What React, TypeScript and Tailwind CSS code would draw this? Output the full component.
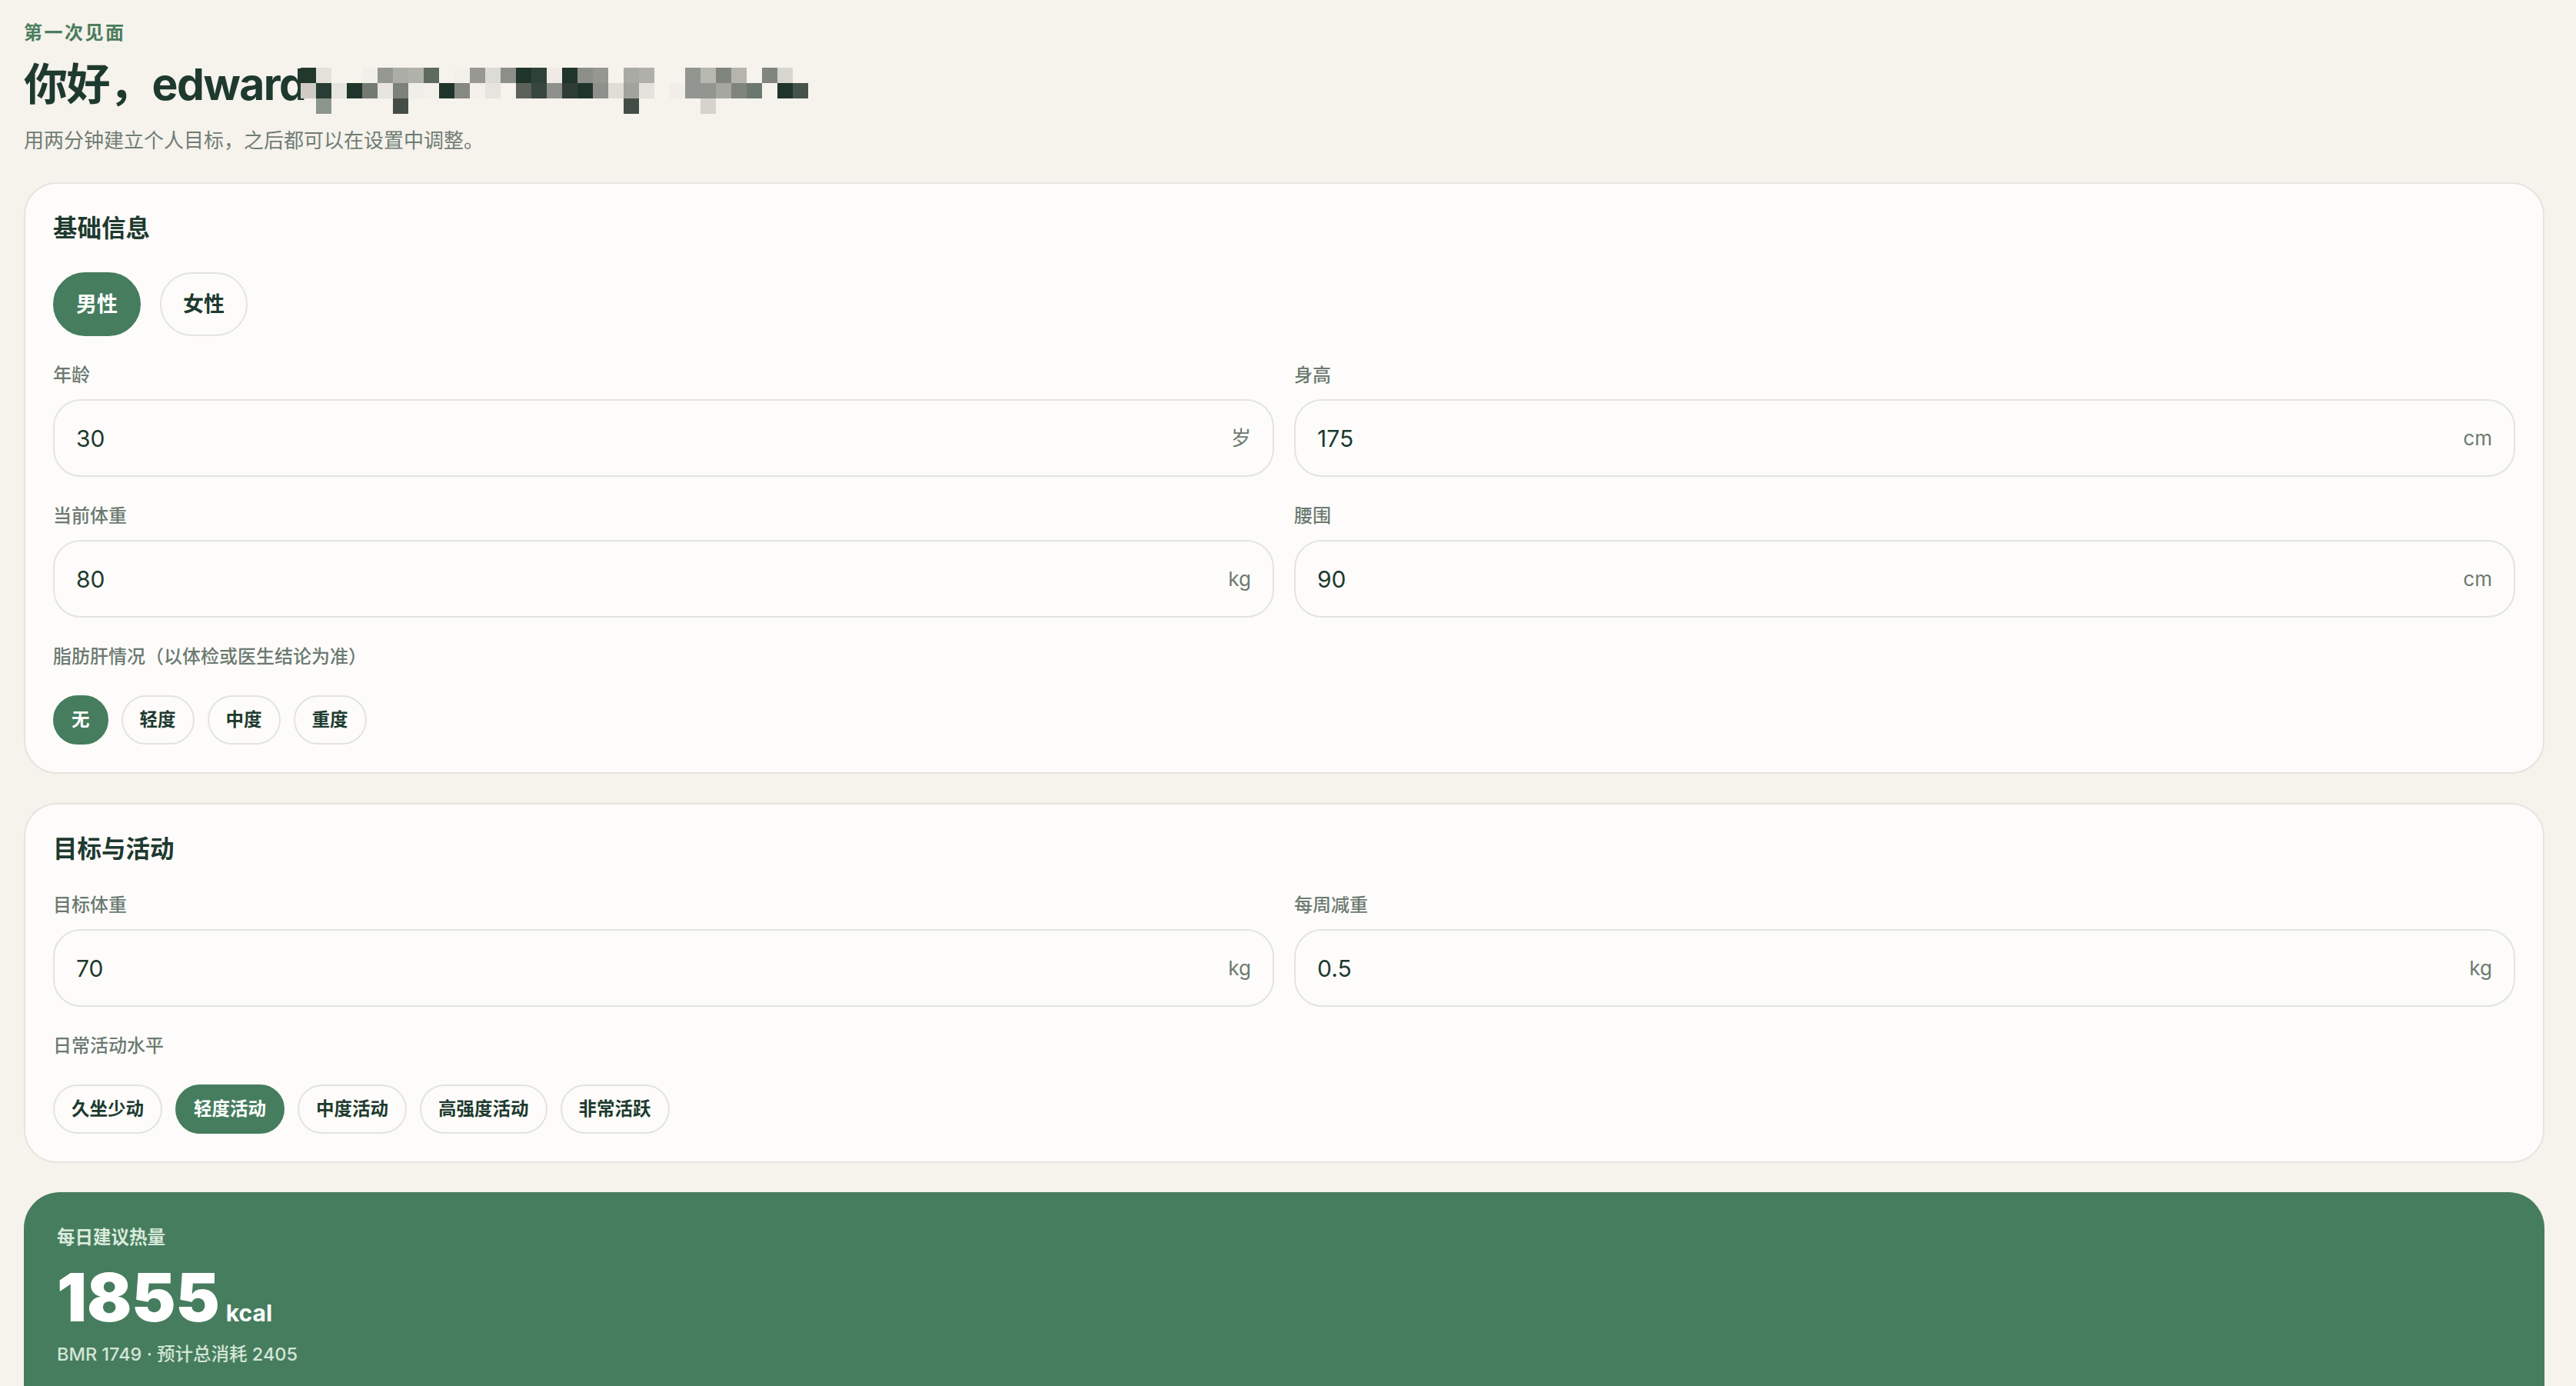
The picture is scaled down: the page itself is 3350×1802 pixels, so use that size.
import React from "react";

// redaction mosaic after the user name, 20px cells
const MOSAIC: (string | null)[][] = [
  ["#23382d", "#e4e1da", null, null, "#f1efe9", "#959891", "#acada6", "#b1b2aa", "#5f6a5f", null, "#f3f0ea", "#969891", "#dddbd5", "#8c8f87", "#1f352b", "#2e4238", "#efebe4", "#1f352b", "#8b8f88", "#959790", null, "#aaaaa4", "#b0b0aa", null, null, "#939590", "#b7b8b0", "#80857d", "#b5b5ae", null, "#80857e", "#d6d6cf", null],
  ["#cfcbc4", "#283d33", "#e6e4de", "#1f352b", "#737a71", "#e8e5df", "#7c817a", "#f0eee8", "#f3f0ea", "#1f352b", "#868982", "#f3f0ea", "#e6e4de", null, "#5c625b", "#37463e", "#8e918b", "#303d36", "#1f352b", "#8e918b", "#e0ddd6", "#a2a39d", "#e4e2dc", null, "#f1eee8", "#939590", "#939590", "#a6a7a0", "#81847d", "#6c776f", null, "#1f352b", "#46534b"],
  [null, "#8d968e", null, null, null, null, "#434d45", null, null, null, null, null, null, null, null, null, null, null, null, null, null, "#434d45", null, null, null, null, "#d6d3cd", null, null, null, null, null, null],
];

function Mosaic() {
  return (
    <svg width={660} height={60} viewBox="0 0 660 60" className="mt-[14px] ml-[-7px] shrink-0">
      {MOSAIC.map((row, y) =>
        row.map((c, x) => (c ? <rect key={`${x}-${y}`} x={x * 20} y={y * 20} width={20} height={20} fill={c} /> : null))
      )}
    </svg>
  );
}

function Field({ label, value, unit }: { label: string; value: string; unit: string }) {
  return (
    <div className="flex flex-col gap-[15px]">
      <div className="text-[24px] leading-[32px] font-medium text-[#6c7a71]">{label}</div>
      <div className="flex h-[101px] items-center justify-between rounded-[36px] border-2 border-[#e2e5de] bg-[#fdfcfa] px-[28px]">
        <span className="text-[30px] leading-[40px] text-[#1e3a2f]">{value}</span>
        <span className="text-[26px] leading-[36px] text-[#6c7a71]">{unit}</span>
      </div>
    </div>
  );
}

function Chip({ label, active }: { label: string; active?: boolean }) {
  return (
    <button
      className={
        active
          ? "rounded-full border-2 border-[#467d5e] bg-[#467d5e] px-[22px] py-[14px] text-[23.5px] leading-[32px] font-bold text-white"
          : "rounded-full border-2 border-[#e2e5de] bg-[#fdfcfa] px-[22px] py-[14px] text-[23.5px] leading-[32px] font-bold text-[#1e3a2f]"
      }
    >
      {label}
    </button>
  );
}

function ChipGroup({ label, options, value }: { label: string; options: string[]; value: string }) {
  return (
    <div className="flex flex-col gap-[34px]">
      <div className="text-[24px] leading-[32px] font-medium text-[#6c7a71]">{label}</div>
      <div className="flex gap-[17px]">
        {options.map(o => (
          <Chip key={o} label={o} active={o === value} />
        ))}
      </div>
    </div>
  );
}

function Card({ title, children }: { title: string; children: React.ReactNode }) {
  return (
    <section className="rounded-[43px] border-2 border-[#e3e5df] bg-[#fdfcfa] px-[36px] pt-[36px] pb-[36px]">
      <h2 className="text-[31.5px] leading-[44px] font-bold text-[#1e3a2f]">{title}</h2>
      <div className="mt-[35px] flex flex-col gap-[35px]">{children}</div>
    </section>
  );
}

export default function App() {
  return (
    <div className="min-h-screen bg-[#f6f2ec] pt-[26px] pr-[41px] pb-[120px] pl-[31px] font-['Inter','Noto_Sans_CJK_SC',sans-serif]">
      <div className="text-[24px] leading-[34px] font-semibold tracking-[2.5px] text-[#4a7d5e]">第一次见面</div>
      <h1 className="mt-[14px] flex items-start text-[57px] leading-[72px] font-bold tracking-[-1.5px] text-[#1e3a2f]">
        <span>你好，edward</span>
        <Mosaic />
      </h1>
      <p className="mt-[18px] text-[26px] leading-[34px] text-[#6f7d74]">用两分钟建立个人目标，之后都可以在设置中调整。</p>

      <div className="mt-[37px] flex flex-col gap-[38px]">
        <Card title="基础信息">
          <div className="flex gap-[25px]">
            <button className="rounded-full border-2 border-[#467d5e] bg-[#467d5e] px-[28px] py-[20px] text-[27px] leading-[39px] font-bold text-white">男性</button>
            <button className="rounded-full border-2 border-[#e2e5de] bg-[#fdfcfa] px-[28px] py-[20px] text-[27px] leading-[39px] font-bold text-[#1e3a2f]">女性</button>
          </div>
          <div className="grid grid-cols-2 gap-x-[26px] gap-y-[35px]">
            <Field label="年龄" value="30" unit="岁" />
            <Field label="身高" value="175" unit="cm" />
            <Field label="当前体重" value="80" unit="kg" />
            <Field label="腰围" value="90" unit="cm" />
          </div>
          <ChipGroup label="脂肪肝情况（以体检或医生结论为准）" options={["无", "轻度", "中度", "重度"]} value="无" />
        </Card>

        <Card title="目标与活动">
          <div className="grid grid-cols-2 gap-x-[26px]">
            <Field label="目标体重" value="70" unit="kg" />
            <Field label="每周减重" value="0.5" unit="kg" />
          </div>
          <ChipGroup label="日常活动水平" options={["久坐少动", "轻度活动", "中度活动", "高强度活动", "非常活跃"]} value="轻度活动" />
        </Card>

        <section className="rounded-[47px] bg-[#467d5e] px-[43px] pt-[43px] pb-[160px]">
          <div className="text-[23.5px] leading-[32px] font-semibold text-[#d9eadd]">每日建议热量</div>
          <div className="mt-[19px] flex items-baseline gap-[8px]">
            <span className="text-[86px] leading-[86px] font-black text-white">1855</span>
            <span className="text-[30px] leading-[36px] font-bold text-white">kcal</span>
          </div>
          <div className="mt-[15px] text-[23.5px] leading-[32px] font-medium text-[#d4e5d8]">BMR 1749 · 预计总消耗 2405</div>
        </section>
      </div>
    </div>
  );
}
